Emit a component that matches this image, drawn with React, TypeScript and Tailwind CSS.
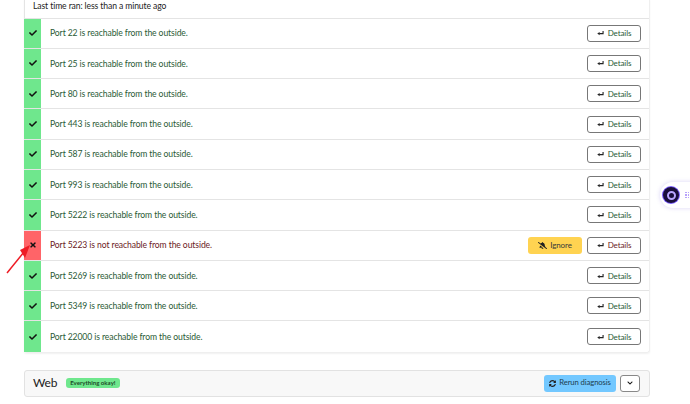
import { FaCheck, FaTimes, FaSyncAlt, FaChevronDown, FaBellSlash } from "react-icons/fa";

const ports: [number, boolean][] = [
  [22, true], [25, true], [80, true], [443, true], [587, true], [993, true],
  [5222, true], [5223, false], [5269, true], [5349, true], [22000, true],
];

function ReturnIcon() {
  return (
    <svg width="7" height="6" viewBox="0 0 8 7" className="text-[#222]">
      <path d="M7 1.2V4.2H2.5" fill="none" stroke="currentColor" strokeWidth="1.3" />
      <path d="M3 2.4V6L0.2 4.2Z" fill="currentColor" />
    </svg>
  );
}

function DetailsButton() {
  return (
    <button className="flex h-[17px] w-[54px] items-center justify-center gap-[4px] rounded-[3px] border border-[#777] bg-white text-[8px] tracking-[-0.1px] text-inherit">
      <ReturnIcon />
      Details
    </button>
  );
}

function Row({ port, ok }: { port: number; ok: boolean }) {
  return (
    <div className="flex h-[30.3px] border-b border-[#e4e4e4] last:border-b-0">
      <div className={`flex w-[17px] shrink-0 items-center justify-center text-[8px] text-[#111] ${ok ? "bg-[#6fe78d]" : "bg-[#ff6468]"}`}>
        {ok ? <FaCheck /> : <FaTimes />}
      </div>
      <div className={`flex flex-1 items-center justify-between pl-[9px] pr-[8px] ${ok ? "text-[#2a5a35]" : "text-[#6b1a1d]"}`}>
        <span className="pt-[1px] text-[8.6px] tracking-[-0.1px]">Port {port} is {ok ? "" : "not "}reachable from the outside.</span>
        <div className="flex items-center gap-[5px]">
          {!ok && (
            <button className="flex h-[17px] w-[54px] items-center justify-center gap-[3px] rounded-[3px] bg-[#ffd351] text-[8px] tracking-[-0.1px] text-[#3a3a3a]">
              <FaBellSlash className="text-[9px] text-[#222]" />
              Ignore
            </button>
          )}
          <DetailsButton />
        </div>
      </div>
    </div>
  );
}

export default function App() {
  return (
    <div className="relative h-[404px] w-[690px] overflow-hidden bg-white font-['Lato','Noto_Sans',sans-serif]">
      <div className="ml-[24px] mt-[-1px] w-[626px]">
        <div className="rounded-b-[3px] border-r border-b border-[#efefef] shadow-[0_1px_2px_rgba(0,0,0,0.06)]">
          <div className="flex h-[19.5px] items-center border-b border-l border-[#e4e4e4] pb-[3px] pl-[8px] text-[8.6px] tracking-[-0.1px] text-[#222]">
            Last time ran: less than a minute ago
          </div>
          {ports.map(([p, ok]) => <Row key={p} port={p} ok={ok} />)}
        </div>
        <div className="mt-[17px] flex h-[27px] items-center justify-between rounded-[3px] border border-[#e2e2e2] bg-[#f8f8f8] pl-[8px] pr-[9px]">
          <div className="flex items-center gap-[9px]">
            <span className="text-[12px] tracking-[-0.2px] text-[#222]">Web</span>
            <span className="rounded-[3px] bg-[#6fe78d] px-[4px] text-[6.1px] leading-[10px] font-bold text-[#1d4a28]">Everything okay!</span>
          </div>
          <div className="flex items-center gap-[4px]">
            <button className="flex h-[16.5px] w-[72px] items-center justify-center gap-[3px] whitespace-nowrap rounded-[3px] bg-[#73c8ff] text-[7.7px] tracking-[-0.1px] text-[#20404f]">
              <FaSyncAlt className="text-[7px] text-[#222]" />
              Rerun diagnosis
            </button>
            <button className="flex h-[16.5px] w-[20px] items-center justify-center rounded-[3px] border border-[#888] bg-white text-[6px] text-[#111]">
              <FaChevronDown />
            </button>
          </div>
        </div>
      </div>

      <svg className="absolute left-[5px] top-[240px]" width="30" height="36" viewBox="0 0 30 36">
        <path d="M2 33L19 12" stroke="#ee1c25" strokeWidth="1.5" fill="none" />
        <path d="M25 5L20 18L15 10Z" fill="#ee1c25" />
      </svg>

      <div className="absolute left-[660px] top-[182px] flex h-[26px] w-[40px] items-center rounded-l-[13px] bg-white pl-[3px] shadow-[0_0_4px_rgba(110,90,220,0.25)]">
        <div className="flex h-[16px] w-[16px] items-center justify-center rounded-full bg-[#1a0f3c] ring-1 ring-[#7a5cff]">
          <div className="h-[9px] w-[9px] rounded-full border-[2px] border-[#b9a6ff]" />
        </div>
        <div className="ml-[6px] grid grid-cols-2 gap-[1px]">
          {[0, 1, 2, 3, 4, 5].map((i) => <div key={i} className="h-[1.5px] w-[1.5px] bg-[#b7a2fb]" />)}
        </div>
      </div>
    </div>
  );
}
